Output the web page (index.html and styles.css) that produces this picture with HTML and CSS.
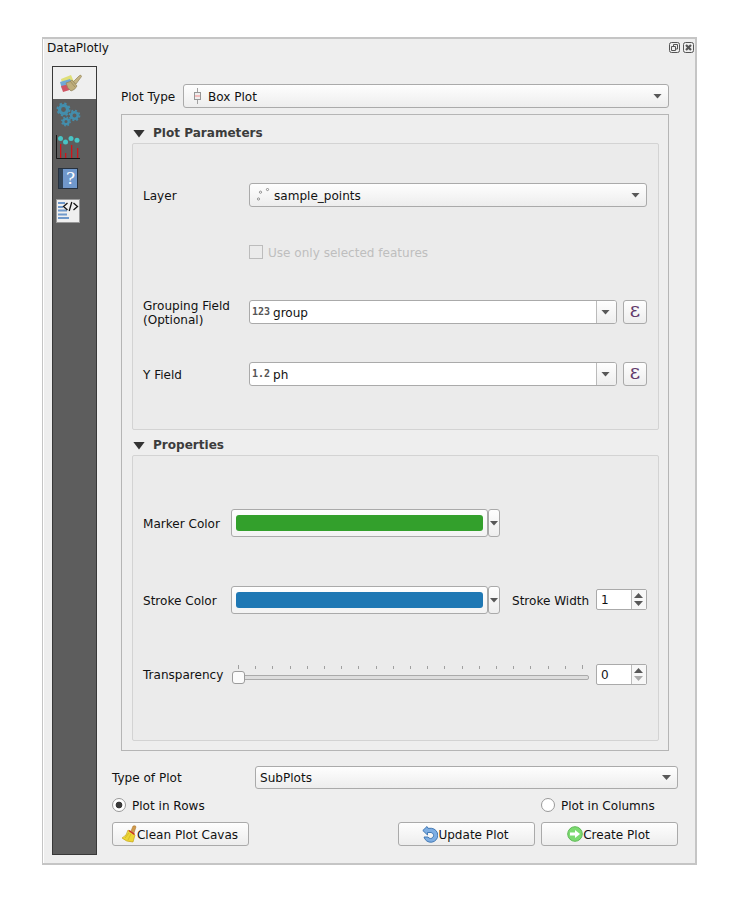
FILE: index.html
```html
<!DOCTYPE html>
<html lang="en">
<head>
<meta charset="utf-8">
<title>DataPlotly</title>
<link rel="stylesheet" href="styles.css">
</head>
<body>
<div class="window">
  <header class="titlebar">
    <span>DataPlotly</span>
    <svg class="title-buttons" width="26" height="12" viewBox="0 0 26 12" fill="none" stroke="#555">
      <rect x="1.5" y=".5" width="10" height="10" rx="2"/><path d="M5.500 4V2.500H9.500V7H8M3.500 4.500H7.500V8.500H3.500Z"/>
      <rect x="15.500" y=".5" width="10" height="10" rx="2"/><path d="M18 3l5 5M23 3l-5 5" stroke-width="2.200"/>
    </svg>
  </header>
  <div class="body">
    <nav class="sidebar">
      <div class="tab active">
        <svg width="26" height="24" viewBox="0 0 26 24">
          <path d="M2 7L12 3l4 9-12 3z" fill="#dfdf78"/><path d="M1 10l10-3 4 7-12 3z" fill="#6fa9d8"/><path d="M2 14l9-2 3 5-10 3z" fill="#cf5564"/>
          <path d="M14 10l6-6q2-2 2.500.5L17 12z" fill="#c5b583" stroke="#93845a" stroke-width=".7"/>
          <path d="M7 11q4-1 6-3l5 6q-2 4-6 5-4-3-5-8z" fill="#bfae7c" stroke="#91835c" stroke-width=".7"/><path d="M11 9l5 6" stroke="#93845a" stroke-width=".7"/>
        </svg>
      </div>
      <div class="tab">
        <svg width="26" height="26" viewBox="0 0 26 26" fill="none" stroke="#438ead">
          <circle cx="7.500" cy="7.500" r="4" stroke-width="3.200"/><circle cx="7.500" cy="7.500" r="6" stroke-width="2" stroke-dasharray="2.360 2.350"/>
          <circle cx="18.500" cy="13.500" r="3.300" stroke-width="2.600"/><circle cx="18.500" cy="13.500" r="5" stroke-width="1.700" stroke-dasharray="1.970 1.950"/>
          <circle cx="10" cy="19.500" r="2.700" stroke-width="2.300"/><circle cx="10" cy="19.500" r="4.200" stroke-width="1.500" stroke-dasharray="1.650 1.650"/>
        </svg>
      </div>
      <div class="tab">
        <svg width="26" height="26" viewBox="0 0 26 26">
          <path d="M.5 1v23.500H24" fill="none" stroke="#171717"/>
          <g fill="#d0141a"><path d="M4 10h1.300v14H4z"/><path d="M9 19h1.300v5H9z"/><path d="M15 11h1.300v13H15z"/><path d="M21 14h1.300v10H21z"/></g>
          <g fill="#48c4c5"><circle cx="4.500" cy="4.500" r="2.500"/><circle cx="9.500" cy="8" r="2.500"/><circle cx="15" cy="4.500" r="2.500"/><circle cx="21" cy="6.300" r="2.500"/></g>
        </svg>
      </div>
      <div class="tab">
        <svg width="26" height="26" viewBox="0 0 26 26">
          <rect x="2.500" y="2.500" width="19" height="20" fill="#7098cc" stroke="#26313f"/><path d="M3 3h4v19H3z" fill="#33465a"/>
          <text x="14.500" y="18" class="help-mark">?</text>
        </svg>
      </div>
      <div class="tab">
        <svg width="26" height="26" viewBox="0 0 26 26">
          <rect x=".5" y="1.500" width="23" height="23" fill="#efefef" stroke="#999"/>
          <path d="M2 5h7M2 9h5M2 12.500h9M2 16.500h9M2 20h11" stroke="#6f98ca" stroke-width="2.200"/>
          <path d="M11.500 5l-4 3.500 4 3.500M17.500 5l4 3.500-4 3.500M15.800 4l-2.600 9" fill="none" stroke="#151515" stroke-width="1.300"/>
        </svg>
      </div>
    </nav>
    <main class="content">
      <div class="type-row">
        <label>Plot Type</label>
        <div class="combo"><svg class="box-icon" width="8" height="16" viewBox="0 0 8 16"><path d="M4.500 0v16" stroke="#a2a2a2"/><rect x="1.500" y="4.500" width="6" height="7" fill="#eee" stroke="#969696"/><path d="M2 8h5" stroke="#f2bcbc" stroke-width="2"/></svg><span>Box Plot</span><i class="arrow"></i></div>
      </div>
      <div class="frame">
        <h2 class="section-title"><i class="fold"></i>Plot Parameters</h2>
        <section class="group parameters">
          <div class="row layer-row"><label>Layer</label>
            <div class="combo"><svg class="points-icon" width="14" height="14" viewBox="0 0 14 14" fill="#fff" stroke="#777" stroke-width=".8"><circle cx="2.500" cy="11" r="1.100"/><circle cx="4.500" cy="4.200" r="1.100"/><circle cx="11.500" cy="1.500" r="1.100"/></svg><span>sample_points</span><i class="arrow"></i></div>
          </div>
          <div class="row check-row"><i class="checkbox"></i><span>Use only selected features</span></div>
          <div class="row grouping-row"><label>Grouping Field<br>(Optional)</label>
            <div class="field"><b>123</b><span>group</span><div class="drop"><i class="arrow"></i></div></div><button class="expression">ε</button>
          </div>
          <div class="row y-row"><label>Y Field</label>
            <div class="field"><b>1.2</b><span>ph</span><div class="drop"><i class="arrow"></i></div></div><button class="expression">ε</button>
          </div>
        </section>
        <h2 class="section-title second"><i class="fold"></i>Properties</h2>
        <section class="group properties">
          <div class="row marker-row"><label>Marker Color</label><div class="color-button"><i class="swatch green"></i></div><div class="color-drop"><i class="arrow"></i></div></div>
          <div class="row stroke-row"><label>Stroke Color</label><div class="color-button"><i class="swatch blue"></i></div><div class="color-drop"><i class="arrow"></i></div>
            <label class="width-label">Stroke Width</label><div class="spin"><span>1</span><div class="steps"><i class="up"></i><i class="down"></i></div></div></div>
          <div class="row transparency-row"><label>Transparency</label>
            <svg class="slider" width="358" height="22" viewBox="0 0 358 22">
              <path d="M7.500 1v4M24.500 2v3M41.500 2v3M59.500 2v3M76.500 2v3M93.500 2v3M110.500 2v3M127.500 2v3M145.500 2v3M162.500 2v3M179.500 2v3M196.500 2v3M213.500 2v3M231.500 2v3M248.500 2v3M265.500 2v3M282.500 2v3M299.500 2v3M317.500 2v3M334.500 2v3M351.500 1v4" stroke="#a0a0a0"/>
              <rect x="1.500" y="11.500" width="356" height="4" rx="1.500" fill="#ddd" stroke="#aaa"/><rect x="1.500" y="7.500" width="12" height="12" rx="2.500" fill="#fbfbfb" stroke="#9c9c9c"/>
            </svg>
            <div class="spin"><span>0</span><div class="steps"><i class="up"></i><i class="down disabled"></i></div></div>
          </div>
        </section>
      </div>
      <div class="plot-row"><label>Type of Plot</label><div class="combo"><span>SubPlots</span><i class="arrow"></i></div></div>
      <div class="radio-row"><i class="radio checked"></i><span class="rows-label">Plot in Rows</span><i class="radio"></i><span>Plot in Columns</span></div>
      <div class="buttons">
        <button class="clean"><svg width="16" height="18" viewBox="0 0 16 18"><path d="M10 6l2-5q3-1 3 1l-2 6z" fill="#d09a4c" stroke="#a8742f" stroke-width=".5"/><path d="M7 5l7 5-2 7q-7 0-11-4 5-2 6-8z" fill="#edd635" stroke="#c4a51c" stroke-width=".7"/><path d="M4 13l4-5M7 15l3-6" stroke="#c7ad20" stroke-width=".6"/><path d="M8 5.500l5.500 3.800" stroke="#c92f22" stroke-width="1.500"/></svg><span>Clean Plot Cavas</span></button>
        <button class="update"><svg width="16" height="18" viewBox="0 0 16 18"><path d="M5 1.500L.8 5.500 5.500 10V7.500H9A3 3 0 1 1 6 12L2 12A7 7 0 1 0 9.500 3.300L6 3.300Z" fill="#7eaee3" stroke="#376fae" stroke-width=".9" stroke-linejoin="round"/></svg><span>Update Plot</span></button>
        <button class="create"><svg width="16" height="16" viewBox="0 0 16 16"><circle cx="8" cy="8" r="7.300" fill="#7cda70" stroke="#5fb957"/><path d="M3 6.500h5V4l5 4-5 4V9.500H3z" fill="#fff"/></svg><span>Create Plot</span></button>
      </div>
    </main>
  </div>
</div>
</body>
</html>
```
FILE: styles.css
```css
* { box-sizing: border-box; }
body { margin: 0; padding: 37px 0 0 42px; background: #fff; color: #111; font: 12.05px/14px "DejaVu Sans", sans-serif; }
svg { display: block; flex: none; }
.window { width: 655px; height: 828px; background: #eee; border: 2px solid #c5c5c5; border-left-width: 1px; box-shadow: inset 1px 0 #fff; }
.titlebar { display: flex; justify-content: space-between; height: 27px; padding: 2px 1px 0 4px; }
.title-buttons { margin-top: 1px; }
.body { display: flex; height: 789px; padding-left: 9px; }
.sidebar { width: 45px; background: #5d5d5d; border: 1px solid #383838; }
.tab { height: 32px; padding: 3px 0 0 3px; }
.help-mark { font: 17px "DejaVu Serif", serif; fill: #fff; text-anchor: middle; }
.active { background: #efefef; padding: 5px 0 0 6px; }
.content { width: 566px; margin-left: 15px; padding-top: 18px; }
.type-row, .plot-row, .radio-row, .row { display: flex; align-items: center; }
.type-row { margin: 0 9px; height: 24px; }
.type-row label { width: 62px; }
label, span { white-space: nowrap; }
.type-row label, .type-row span, .row > label, .row span, .radio-row span, .buttons span { padding-top: 2px; }
.combo { display: flex; align-items: center; flex: 1; height: 24px; border: 1px solid #aaa; border-radius: 3px; padding: 0 6px 0 4px; background: linear-gradient(#fefefe, #ededed); }
.combo .arrow { margin-left: auto; }
.arrow { flex: none; width: 9px; height: 5px; background: #585858; clip-path: polygon(0 0, 100% 0, 50% 100%); }
.box-icon { margin: 0 7px 0 5px; }
.points-icon { margin: 0 4px 0 2px; }
.frame { height: 637px; margin: 6px 9px 0; border: 1px solid #b5b5b5; padding: 10px 9px 0 10px; }
.section-title { display: flex; align-items: center; margin: 0; height: 18px; padding-bottom: 2px; color: #3c3c3c; font: bold 12.05px/14px "DejaVu Sans", sans-serif; }
.second { margin-top: 7px; }
.fold { width: 12px; height: 8px; margin: 1px 8px 0 1px; background: #333; clip-path: polygon(0 0, 100% 0, 50% 100%); }
.group { height: 287px; border: 1px solid #d3d3d3; border-radius: 2px; background: #ebebeb; padding-left: 10px; padding-right: 11px; }
.parameters { padding-top: 39px; }
.properties { height: 286px; padding-top: 53px; }
.row > label { width: 106px; }
.check-row { margin-top: 37px; padding-left: 106px; height: 16px; color: #bebebe; }
.checkbox { width: 14px; height: 14px; border: 1px solid #bcbcbc; margin-right: 5px; }
.grouping-row { height: 28px; margin-top: 38px; }
.y-row { height: 24px; margin-top: 36px; }
.field { display: flex; align-items: center; width: 368px; height: 24px; border: 1px solid #aaa; border-radius: 3px; background: #fff; padding-left: 2px; }
.field b { width: 21px; color: #555; font: bold 10px/14px "DejaVu Sans Mono", monospace; }
.drop { display: flex; align-items: center; width: 20px; height: 22px; margin-left: auto; padding-left: 4px; border-left: 1px solid #bbb; border-radius: 0 2px 2px 0; background: linear-gradient(#fefefe, #eee); }
button { font: inherit; color: inherit; border: 1px solid #aaa; border-radius: 3px; padding: 0; background: linear-gradient(#fefefe, #ededed); }
.expression { width: 24px; height: 24px; margin-left: 6px; padding-bottom: 4px; color: #613a6b; font: 20px/18px "DejaVu Serif", serif; }
.properties .row > label { width: 88px; }
.color-button { width: 257px; height: 28px; padding: 5px 4px; border: 1px solid #aaa; border-radius: 3px; background: linear-gradient(#fefefe, #f3f3f3); }
.swatch { display: block; height: 16px; border-radius: 3px; }
.green { background: #33a02c; }
.blue { background: #1f78b4; }
.color-drop { display: flex; align-items: center; justify-content: center; width: 12px; height: 28px; border: 1px solid #aaa; border-radius: 3px; background: linear-gradient(#fefefe, #eee); }
.stroke-row { margin-top: 49px; }
.properties .row > .width-label { width: 84px; margin-left: 12px; }
.spin { display: flex; align-items: center; width: 51px; height: 21px; margin-bottom: 1px; border: 1px solid #aaa; border-radius: 2px; background: #fff; padding-left: 4px; }
.row .spin span { padding-top: 0; }
.steps { width: 15px; height: 19px; margin-left: auto; border-left: 1px solid #bbb; background: #f7f7f7; padding: 3px 2px; }
.up, .down { display: block; width: 9px; height: 5px; background: #585858; clip-path: polygon(0 100%, 50% 0, 100% 100%); }
.down { margin-top: 3px; clip-path: polygon(0 0, 100% 0, 50% 100%); }
.disabled { background: #aaa; }
.transparency-row { margin-top: 50px; }
.properties .transparency-row > label { padding-top: 0; }
.slider { margin-right: 7px; }
.plot-row { margin-top: 15px; height: 23px; }
.plot-row .combo { height: 23px; }
.plot-row label { width: 143px; }
.radio-row { height: 14px; margin-top: 9px; }
.radio { width: 14px; height: 14px; margin-right: 6px; border: 1px solid #999; border-radius: 50%; background: #fff; }
.checked { background: radial-gradient(circle, #3b3b3b 0 3px, #fff 3.700px); }
.rows-label { width: 409px; }
.buttons { display: flex; margin-top: 10px; }
.buttons button { display: flex; align-items: center; justify-content: center; width: 137px; height: 24px; padding-right: 2px; }
.buttons .update { margin-left: 149px; }
.buttons .create { margin-left: 6px; }
```
